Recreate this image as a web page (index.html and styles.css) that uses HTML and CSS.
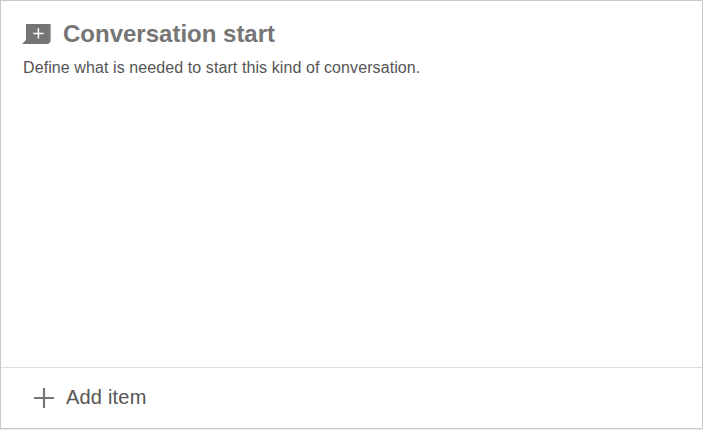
FILE: index.html
```html
<!DOCTYPE html>
<html lang="en">
<head>
<meta charset="utf-8">
<title>Conversation start</title>
<link rel="stylesheet" href="styles.css">
</head>
<body>
<section class="card">
  <div class="card-body">
    <header class="card-header">
      <svg class="icon-start" width="29" height="20" viewBox="0 0 29 20" aria-hidden="true">
        <path d="M4 0H28.6V16Q28.6 20 24.6 20H0L4 16Z" fill="#757575"/>
        <path d="M16.4 4.3V14.5M11.2 9.4H21.6" stroke="#fff" stroke-width="1.5" fill="none"/>
      </svg>
      <h1 class="title"><span>Conversation start</span></h1>
    </header>
    <p class="description">Define what is needed to start this kind of conversation.</p>
  </div>
  <button class="add-item" type="button">
    <svg class="icon-plus" width="20" height="20" viewBox="0 0 20 20" aria-hidden="true">
      <path d="M10 0V20M0 10H20" stroke="#757575" stroke-width="2.2" fill="none"/>
    </svg>
    <span class="add-label">Add item</span>
  </button>
</section>
</body>
</html>
```

FILE: styles.css
```css
* {
  box-sizing: border-box;
}

body {
  margin: 0;
  height: 430px;
  overflow: hidden;
  background: #fff;
  color: #555;
  font-family: "Liberation Sans", Arial, sans-serif;
}

.card {
  display: flex;
  flex-direction: column;
  width: 703px;
  height: 429px;
  border: 1px solid #c8c8c8;
  box-shadow: 0 1px 0 #e9e9e9;
}

.card-body {
  flex: 1;
  padding: 18px 22px 0;
}

.card-header {
  display: flex;
  align-items: center;
  gap: 12px;
  height: 30px;
  margin-left: -1px;
}

.title {
  margin: 0;
  color: #757575;
  font-size: 24px;
  font-weight: 700;
  line-height: 30px;
  white-space: nowrap;
}

.description {
  margin: 9px 0 0;
  font-size: 16px;
  line-height: 20px;
  letter-spacing: 0.09px;
  white-space: nowrap;
}

.add-item {
  display: flex;
  align-items: center;
  gap: 12px;
  height: 61px;
  padding: 0 33px;
  border: 0;
  border-top: 1px solid #dcdcdc;
  background: transparent;
  color: #555;
  font: inherit;
  font-size: 20px;
  line-height: 24px;
  letter-spacing: 0.2px;
}

.add-label {
  padding-bottom: 2px;
}
```
